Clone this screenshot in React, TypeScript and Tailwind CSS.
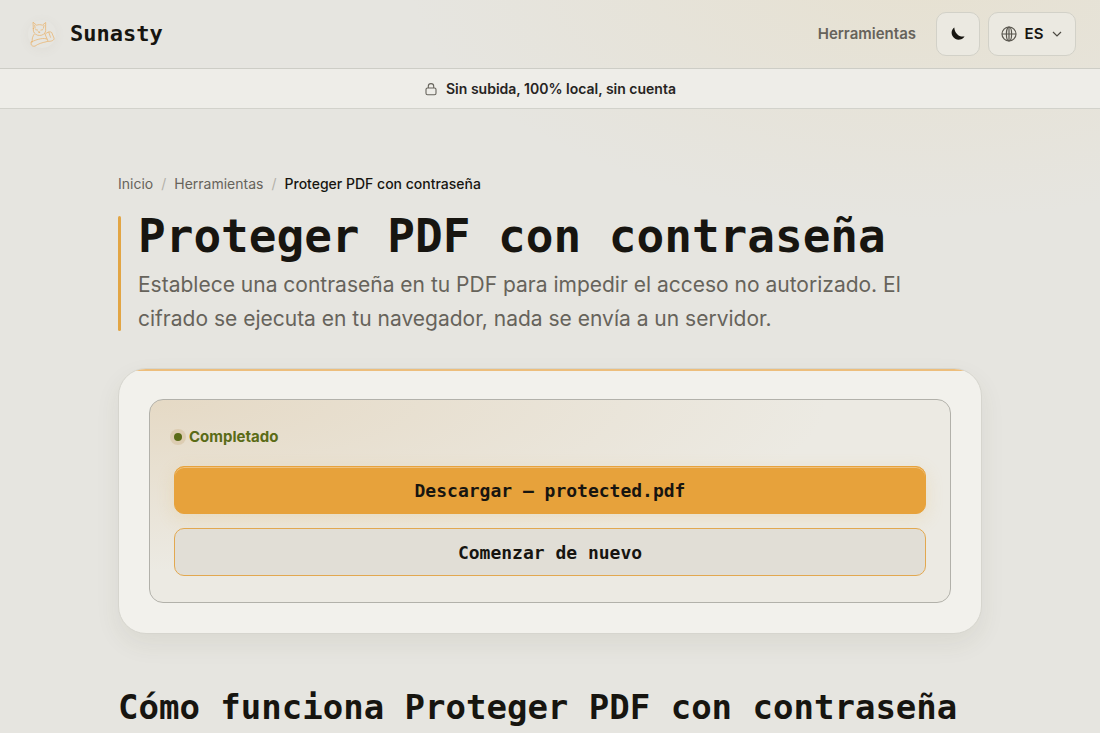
import React from 'react';

const mono = "font-['DejaVu_Sans_Mono','Liberation_Mono',monospace]";

function CatLogo() {
  return (
    <svg viewBox="0 0 28 28" className="size-7" fill="none" stroke="#e9b16a" strokeOpacity="0.72" strokeWidth="1" strokeLinecap="round" strokeLinejoin="round" aria-hidden="true">
      <path d="M5.300 8.500 5 2.200l3.600 3c1.800-.7 4-.7 5.800 0l3.300-2.700-.1 6.400c.4 2.300-.4 4.200-2 5.300-2.300 1.700-5.800 1.700-8 0-1.800-1.300-2.700-3.400-2.300-5.700Z" />
      <path d="m6.700 5.200.4 3M16 5.400l-.6 2.800M7.700 9.700l1.900.4M14.700 9.700l-1.800.4M10.600 12h1.500l-.8.8-.7-.8Z" />
      <path d="M6.200 14.200c-1.700 2.300-2.300 4.800-2 7.800M16.700 13.500l2.500 5.700" />
      <path d="M3.300 22c3-1.500 6-2.600 9.300-3.200 2.800-.5 5.400-.4 6.600.5 1 .9.700 2.100-1 2.500-4 .8-8 2-11.200 4.300-1.800.6-3.600-.4-3.900-1.900-.1-.8 0-1.500.2-2.200Z" />
      <path d="M17.600 13.800c1.800-1.900 4.600-2.700 6.100-1.300l2.300 5.500c.5 2-1.500 3.500-6.500 3.400" />
      <path d="m20.800 12.300 1.700 5" />
    </svg>
  );
}

function Moon() {
  return (
    <svg viewBox="0 0 16 16" className="size-4" fill="#171510" aria-hidden="true">
      <path d="M4.300 1.500C1.600 3.300.9 7 2.500 9.900c1.700 3.100 5.400 4.500 8.700 3.300 1.600-.6 2.800-1.600 3.300-2.900-4.600 1.300-9.900-2.500-10.200-8.800Z" />
    </svg>
  );
}

function Globe() {
  return (
    <svg viewBox="0 0 16 16" className="size-4" fill="none" stroke="#59564e" strokeWidth="1.200" aria-hidden="true">
      <circle cx="8" cy="8" r="7" />
      <path d="M1 8h14M8 1v14" />
      <ellipse cx="8" cy="8" rx="2.600" ry="7" />
    </svg>
  );
}

export default function App() {
  return (
    <div className="min-h-screen bg-[#e6e5e0] bg-[radial-gradient(ellipse_520px_250px_at_84%_-30px,rgba(232,205,140,0.18),transparent)] bg-no-repeat font-['Inter',sans-serif] text-[#171510]">
      <header className="flex h-[69px] items-center justify-between border-b border-[#cdcdc6] pr-6 pl-7">
        <a href="#" className="flex items-center gap-3.5">
          <span className="rounded-full shadow-[0_2px_12px_rgba(120,110,80,0.06)]">
            <CatLogo />
          </span>
          <span className={`${mono} text-[22px] leading-7 font-bold`}>Sunasty</span>
        </a>
        <nav className="flex items-center gap-2">
          <a href="#herramientas" className="mr-3 text-[15px] font-semibold text-[#66635b]">Herramientas</a>
          <button type="button" aria-label="Cambiar tema" className="flex size-11 items-center justify-center rounded-[10px] border border-[#d2d1c8] bg-[#ebe9e1]">
            <Moon />
          </button>
          <button type="button" aria-label="Idioma: ES" className="flex h-11 w-22 items-center justify-between rounded-[10px] border border-[#d2d1c8] bg-[#ebe9e1] px-3 text-[15px] font-semibold">
            <Globe />
            <span>ES</span>
            <svg viewBox="0 0 12 12" className="size-3" fill="none" stroke="#4c4942" strokeWidth="1.200" aria-hidden="true">
              <path d="m2 4 4 4 4-4" />
            </svg>
          </button>
        </nav>
      </header>

      <div className="flex h-10 items-center justify-center gap-2 border-b border-[#d2d2cb] bg-[#eeede8] text-sm font-semibold text-[#26241f]">
        <svg viewBox="0 0 14 14" className="size-3.5" fill="none" stroke="#66635b" strokeWidth="1.100" aria-hidden="true">
          <rect x="2" y="6" width="10" height="6.800" rx="1.500" />
          <path d="M4.300 6V4.300a2.700 2.700 0 0 1 5.400 0V6" />
        </svg>
        Sin subida, 100% local, sin cuenta
      </div>

      <main className="mx-auto max-w-[904px] px-5 pt-16">
        <nav aria-label="Ruta" className="flex gap-2 text-sm leading-[22px] text-[#66635b]">
          <a href="#inicio">Inicio</a>
          <span className="text-[#b3b1a9]">/</span>
          <a href="#herramientas">Herramientas</a>
          <span className="text-[#b3b1a9]">/</span>
          <span aria-current="page" className="font-medium text-[#171510]">Proteger PDF con contraseña</span>
        </nav>

        <div className="mt-4 flex gap-[17px]">
          <div className="my-[5px] w-[3px] shrink-0 rounded-xs bg-[#e2a544]" />
          <div>
            <h1 className={`${mono} text-[46px] leading-[50px] font-bold`}>Proteger PDF con contraseña</h1>
            <p className="mt-[7px] max-w-[780px] text-[21px] leading-[34px] text-[#66635b]">
              Establece una contraseña en tu PDF para impedir el acceso no autorizado. El cifrado se ejecuta en tu navegador, nada se envía a un servidor.
            </p>
          </div>
        </div>

        <section className="relative mt-8 overflow-clip rounded-[28px] border border-[#d6d5ce] bg-[#f2f1ec] p-[30px] shadow-[0_10px_24px_rgba(80,75,40,0.08)]">
          <div className="absolute inset-x-0 top-0 h-[2px] bg-[#edbe7c]" />
          <div className="rounded-[14px] border border-[#b2b1aa] bg-[#eceae3] bg-[radial-gradient(ellipse_at_top_left,rgba(217,188,144,0.36),transparent_60%)] px-6 py-[26px]">
            <p role="status" className="flex items-center gap-[7px] text-[15px] leading-[22px] font-bold text-[#5a6b17]">
              <span className="size-2 rounded-full bg-[#5a6b17] shadow-[0_0_0_4px_rgba(190,155,100,0.25)]" />
              Completado
            </p>
            <div className="mt-[18px] flex flex-col gap-3.5">
              <button type="button" className={`${mono} h-12 rounded-[10px] border border-[#e7a23b] bg-[#e7a23b] text-[18px] font-bold shadow-[inset_0_1px_0_rgba(255,255,255,0.35),0_5px_18px_rgba(231,180,80,0.20)]`}>
                Descargar — protected.pdf
              </button>
              <button type="button" className={`${mono} h-12 rounded-[10px] border border-[#e2a850] bg-[#e1ded6] text-[18px] font-bold`}>
                Comenzar de nuevo
              </button>
            </div>
          </div>
        </section>

        <h2 className={`${mono} mt-[52px] text-[34px] leading-[42px] font-bold`}>Cómo funciona Proteger PDF con contraseña</h2>
      </main>
    </div>
  );
}
